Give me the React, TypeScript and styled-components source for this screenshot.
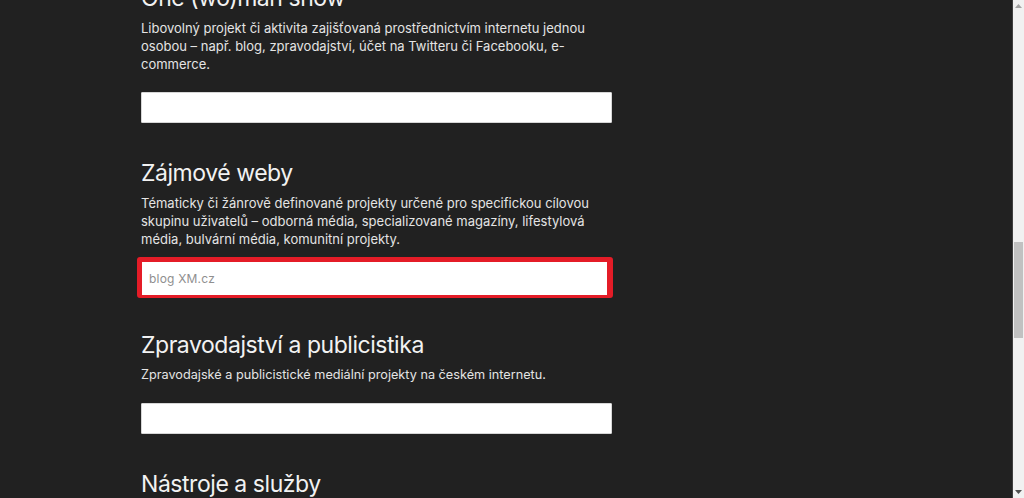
import React from "react";
import { styled, createGlobalStyle } from "styled-components";

interface Category {
  title: string;
  description: string;
  small?: boolean;
  placeholder?: string;
  highlight?: boolean;
}

const categories: Category[] = [
  {
    title: "One (wo)man show",
    description:
      "Libovolný projekt či aktivita zajišťovaná prostřednictvím internetu jednou osobou – např. blog, zpravodajství, účet na Twitteru či Facebooku, e-commerce.",
  },
  {
    title: "Zájmové weby",
    description:
      "Tématicky či žánrově definované projekty určené pro specifickou cílovou skupinu uživatelů – odborná média, specializované magazíny, lifestylová média, bulvární média, komunitní projekty.",
    placeholder: "blog XM.cz",
    highlight: true,
  },
  {
    title: "Zpravodajství a publicistika",
    description: "Zpravodajské a publicistické mediální projekty na českém internetu.",
    small: true,
  },
  {
    title: "Nástroje a služby",
    description: "",
  },
];

const App: React.FC = () => {
  return (
    <>
      <GlobalStyle />
      <Page>
        <Main>
          <Column>
            {categories.map((item) => (
              <Section key={item.title}>
                <Title>{item.title}</Title>
                {item.description && (
                  <Description $small={item.small}>{item.description}</Description>
                )}
                {item.description && (
                  <Field type="text" placeholder={item.placeholder} $highlight={item.highlight} />
                )}
              </Section>
            ))}
          </Column>
        </Main>
        <ScrollTrack>
          <Arrow viewBox="0 0 7 4" width="7" height="4">
            <path d="M0 4 L3.5 0 L7 4 Z" fill="#a3a3a3" />
          </Arrow>
          <ThumbArea>
            <Thumb />
          </ThumbArea>
          <Arrow viewBox="0 0 7 4" width="7" height="4">
            <path d="M0 0 L3.5 4 L7 0 Z" fill="#505050" />
          </Arrow>
        </ScrollTrack>
      </Page>
    </>
  );
};

const GlobalStyle = createGlobalStyle`
  html, body {
    margin: 0;
    padding: 0;
    background: #212121;
  }
  * {
    box-sizing: border-box;
  }
`;

const Page = styled.div`
  display: flex;
  width: 1024px;
  height: 498px;
  overflow: hidden;
  background: #212121;
  font-family: Inter, "Liberation Sans", sans-serif;
`;

const Main = styled.main`
  flex: 1;
  padding-left: 141px;
  overflow: hidden;
`;

const Column = styled.div`
  width: 471px;
  margin-top: -17px;
`;

const Section = styled.section`
  padding-bottom: 35px;
`;

const Title = styled.h2`
  margin: 0;
  font-size: 23px;
  line-height: 30px;
  font-weight: 400;
  letter-spacing: -0.45px;
  color: #f2f2f2;
`;

const Description = styled.p<{ $small?: boolean }>`
  margin: 6px 0 0;
  font-size: ${({ $small }) => ($small ? "12.7px" : "13px")};
  line-height: 18px;
  color: #e4e4e4;
`;

const Field = styled.input<{ $highlight?: boolean }>`
  display: block;
  margin-top: 19px;
  width: 471px;
  height: 31px;
  padding: 0 7px;
  border: 1px solid #d6d6d6;
  border-radius: 1px;
  background: #fff;
  font-family: inherit;
  font-size: 12px;
  letter-spacing: 0.2px;
  color: #333;
  outline: none;

  &::placeholder {
    color: #8f8f8f;
  }

  ${({ $highlight }) =>
    $highlight &&
    `
    width: 476px;
    height: 41px;
    margin: 9px 0 -3px -4px;
    border-width: 5px 6px 3px 5px;
    border-color: #e41c27;
    border-radius: 3px;
  `}
`;

const ScrollTrack = styled.div`
  width: 12px;
  display: flex;
  flex-direction: column;
  align-items: center;
  background: #f1f1f1;
  border-left: 1px solid #3f3f3f;
  padding: 4px 0;
`;

const Arrow = styled.svg`
  display: block;
  flex-shrink: 0;
`;

const ThumbArea = styled.div`
  flex: 1;
  width: 100%;
  padding: 234px 1px 0 1px;
`;

const Thumb = styled.div`
  height: 96px;
  background: #c1c1c1;
`;

export default App;
